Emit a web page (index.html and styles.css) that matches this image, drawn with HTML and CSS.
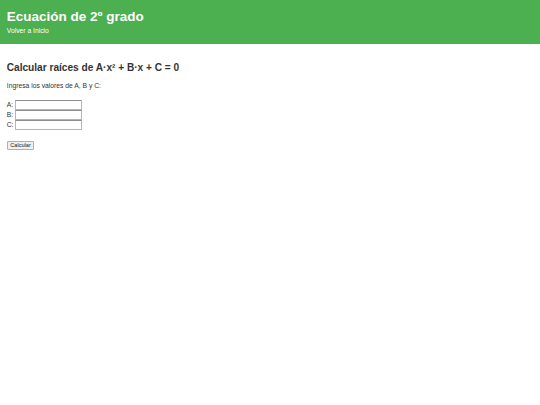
FILE: index.html
```html
<!DOCTYPE html>
<html lang="es">
<head>
<meta charset="utf-8">
<title>Ecuación de 2º grado</title>
<link rel="stylesheet" href="styles.css">
</head>
<body>
<header class="header">
  <h1 class="title">Ecuación de 2º grado</h1>
  <a class="back" href="#">Volver a Inicio</a>
</header>
<main class="main">
  <h2 class="subtitle">Calcular raíces de A·x² + B·x + C = 0</h2>
  <p class="intro">Ingresa los valores de A, B y C:</p>
  <form class="form">
    <div class="row"><label for="a">A:</label><input id="a" type="text"></div>
    <div class="row"><label for="b">B:</label><input id="b" type="text"></div>
    <div class="row"><label for="c">C:</label><input id="c" type="text"></div>
    <div class="actions"><button class="btn" type="button">Calcular</button></div>
  </form>
</main>
</body>
</html>
```

FILE: styles.css
```css
body {
  margin: 0;
  font-family: "Liberation Sans", Arial, sans-serif;
  font-size: 6.75px;
  color: #333;
  background: #fff;
}
.header {
  background: #4caf50;
  color: #fff;
  padding: 9px 6.75px 8.7px;
}
.title {
  margin: 0 0 2.3px;
  font-size: 13.5px;
  line-height: 16px;
}
.back {
  display: block;
  color: #fff;
  text-decoration: none;
  font-size: 6.75px;
  line-height: 8px;
}
.main {
  padding: 9.6px 6.75px;
}
.subtitle {
  font-size: 10.125px;
  line-height: 12px;
  margin: 8px 0 0;
}
.intro {
  margin: 8.7px 0 9.7px;
  line-height: 8px;
}
.row {
  display: flex;
  align-items: center;
  gap: 2px;
  height: 10px;
}
.row label {
  width: 6px;
  line-height: 8px;
}
.row input {
  box-sizing: border-box;
  width: 67px;
  height: 9.5px;
  padding: 0;
  margin: 0;
  border: 1px solid #b5b5b5;
  border-top-color: #8f8f8f;
  border-radius: 0;
  background: #fff;
  font-size: 5.6px;
}
.actions {
  margin-top: 11px;
}
.btn {
  box-sizing: border-box;
  height: 8.6px;
  width: 27.5px;
  padding: 0;
  margin: 0;
  font-family: "Liberation Sans", Arial, sans-serif;
  font-size: 5.6px;
  line-height: 6px;
  color: #222;
  background: #efefef;
  border: 1px solid #b0b0b0;
  border-radius: 1px;
}
```
